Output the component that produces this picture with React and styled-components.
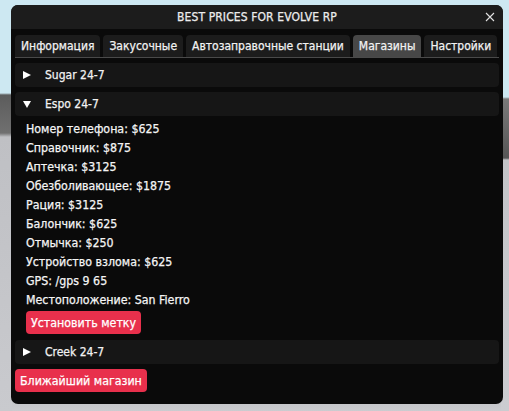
import React from "react";
import styled, { createGlobalStyle } from "styled-components";

const Global = createGlobalStyle`
  html, body { margin: 0; padding: 0; }
  body {
    width: 509px;
    height: 411px;
    overflow: hidden;
    background:
      linear-gradient(to bottom, #cde8f2 0px, #cde8f2 93px, #5c5c5c 95px, #707070 133px, #bfc0c4 137px, #c9cace 411px) left top / 12px 100% no-repeat,
      linear-gradient(to bottom, #cde8f2 0px, #cde8f2 97px, #7a7a7a 99px, #565656 158px, #c3c4c8 160px, #cbccd0 411px) right top / 8px 100% no-repeat,
      linear-gradient(to bottom, #cde8f2 0px, #cde8f2 380px, #c3c4c8 400px, #cbccd0 411px);
    font-family: "DejaVu Sans Condensed", "DejaVu Sans", sans-serif;
    font-stretch: condensed;
    -webkit-text-stroke: 0.25px;
  }
`;

const Window = styled.div`
  margin: 5px 0 0 11px;
  width: 492px;
  height: 399px;
  background: #0a0a0a;
  border-radius: 7px;
  overflow: hidden;
  display: flex;
  flex-direction: column;
`;

const TitleBar = styled.div`
  height: 24px;
  background: #1c1c1c;
  position: relative;
  display: flex;
  align-items: center;
  justify-content: center;
  color: #ececec;
  font-size: 12px;
  letter-spacing: 0.1px;
`;

const Close = styled.button`
  position: absolute;
  right: 8px;
  top: 7px;
  width: 10px;
  height: 10px;
  padding: 0;
  border: 0;
  background: none;
  display: flex;
`;

const Body = styled.div`
  padding: 6px 4px 0 4px;
  display: flex;
  flex-direction: column;
`;

const Tabs = styled.div`
  display: flex;
  gap: 3px;
  border-bottom: 1px solid #4a4a4a;
  margin-bottom: 5px;
`;

const Tab = styled.div`
  height: 22px;
  padding: 0 6px;
  display: flex;
  align-items: center;
  border-radius: 4px 4px 0 0;
  background: ${(p) => (p.$active ? "#474747" : "#1c1c1c")};
  color: #f2f2f2;
  font-size: 12px;
  white-space: nowrap;
`;

const Header = styled.div`
  height: 24px;
  border-radius: 4px;
  background: #161616;
  display: flex;
  align-items: center;
  padding-left: 8px;
  gap: 14px;
  color: #f2f2f2;
  font-size: 12px;
  margin-bottom: 5px;
  cursor: pointer;
`;

const Arrow = styled.svg`
  width: 8px;
  height: 8px;
  flex: none;
`;

const Content = styled.div`
  margin-top: -1px;
  padding: 0 0 6px 11px;
  display: flex;
  flex-direction: column;
  align-items: flex-start;
`;

const Line = styled.div`
  height: 19px;
  line-height: 19px;
  color: #f5f5f5;
  font-size: 12.3px;
  white-space: nowrap;
`;

const RedButton = styled.button`
  height: 23px;
  padding: 0 5px;
  border: 0;
  border-radius: 4px;
  background: #e8304c;
  color: #ffffff;
  font-family: "DejaVu Sans Condensed", "DejaVu Sans", sans-serif;
  font-stretch: condensed;
  font-size: 12.3px;
  margin-top: ${(p) => p.$mt || 0}px;
`;

const tabs = ["Информация", "Закусочные", "Автозаправочные станции", "Магазины", "Настройки"];

const shops = [
  { name: "Sugar 24-7", open: false },
  {
    name: "Espo 24-7",
    open: true,
    items: [
      "Номер телефона: $625",
      "Справочник: $875",
      "Аптечка: $3125",
      "Обезболивающее: $1875",
      "Рация: $3125",
      "Балончик: $625",
      "Отмычка: $250",
      "Устройство взлома: $625",
      "GPS: /gps 9 65",
      "Местоположение: San Fierro",
    ],
  },
  { name: "Creek 24-7", open: false },
];

function Tri({ open }) {
  return (
    <Arrow viewBox="0 0 8 8">
      {open ? (
        <polygon points="0,1 8,1 4,8" fill="#fff" />
      ) : (
        <polygon points="0,0 8,4 0,8" fill="#fff" />
      )}
    </Arrow>
  );
}

export default function App() {
  return (
    <>
      <Global />
      <Window>
        <TitleBar>
          BEST PRICES FOR EVOLVE RP
          <Close aria-label="close">
            <svg width="10" height="10" viewBox="0 0 10 10">
              <path d="M1 1 L9 9 M9 1 L1 9" stroke="#e0e0e0" strokeWidth="1.1" />
            </svg>
          </Close>
        </TitleBar>
        <Body>
          <Tabs>
            {tabs.map((t) => (
              <Tab key={t} $active={t === "Магазины"}>
                {t}
              </Tab>
            ))}
          </Tabs>
          {shops.map((s) => (
            <React.Fragment key={s.name}>
              <Header>
                <Tri open={s.open} />
                {s.name}
              </Header>
              {s.open && (
                <Content>
                  {s.items.map((it) => (
                    <Line key={it}>{it}</Line>
                  ))}
                  <RedButton $mt={1}>Установить метку</RedButton>
                </Content>
              )}
            </React.Fragment>
          ))}
          <div>
            <RedButton>Ближайший магазин</RedButton>
          </div>
        </Body>
      </Window>
    </>
  );
}
